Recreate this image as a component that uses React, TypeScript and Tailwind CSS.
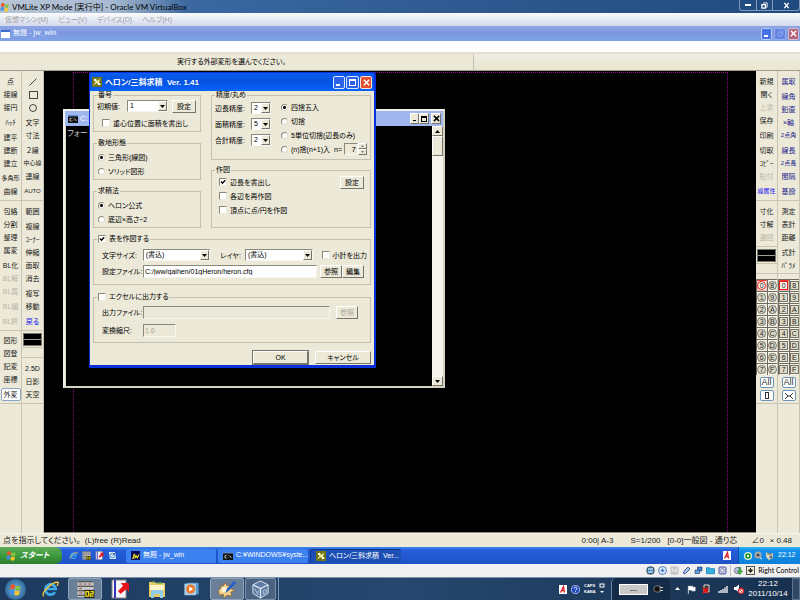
import React from 'react';

type Tool = {
  label: React.ReactNode;
  name?: string;
  gap?: boolean;
  small?: boolean;
  tone?: 'off' | 'navy' | 'blue';
  framed?: boolean;
};

const toneClass = {
  off: 'text-[#b9b6a6]',
  navy: 'text-[#1c1c8c]',
  blue: 'text-[#1414f0]',
};

const ToolGroup = ({ tools, className = '' }: { tools: Tool[]; className?: string }) => (
  <div className={`flex flex-col items-center border-b border-[#c9c5b2] ${className}`}>
    {tools.map((t, i) => (
      <button
        key={i}
        aria-label={t.name}
        disabled={t.tone === 'off'}
        className={`h-[13px] w-[20px] shrink-0 flex items-center justify-center whitespace-nowrap leading-[13px] ${
          t.small ? 'text-[6px]' : 'text-[7px]'
        } ${t.tone ? toneClass[t.tone] : 'text-[#1a1a1a]'} ${t.gap ? 'mt-[2px]' : ''} ${
          t.framed ? 'rounded-[2px] border border-[#8aa5c8] bg-white' : ''
        }`}
      >
        {t.label}
      </button>
    ))}
  </div>
);

const ShapeIcon = ({ kind }: { kind: 'line' | 'rect' | 'circle' }) => (
  <svg width="10" height="10" viewBox="0 0 10 10" fill="none" stroke="#444" strokeWidth="1">
    {kind === 'line' && <path d="M1.5 8.5 8.5 1.5" />}
    {kind === 'rect' && <rect x="1.5" y="1.5" width="8" height="7" />}
    {kind === 'circle' && <circle cx="5" cy="5" r="3.5" />}
  </svg>
);

const LineSwatch = () => (
  <button aria-label="線属性" className="mx-px h-[13px] self-stretch border border-[#77756a] bg-black flex items-center">
    <span className="h-px w-full bg-[#a0a0a0]" />
  </button>
);

const left1: Tool[][] = [
  [
    { label: '点' }, { label: '接線' }, { label: '接円' }, { label: 'ﾊｯﾁ', gap: true }, { label: '建平', gap: true },
    { label: '建断' }, { label: '建立' }, { label: '多角形', gap: true, small: true }, { label: '曲線' },
  ],
  [
    { label: '包絡' }, { label: '分割' }, { label: '整理' }, { label: '属変' }, { label: 'BL化', gap: true },
    { label: 'BL解', tone: 'off' }, { label: 'BL属', tone: 'off' }, { label: 'BL編', tone: 'off', gap: true },
    { label: 'BL終', tone: 'off', gap: true },
  ],
  [{ label: '図形' }, { label: '図登' }, { label: '記変' }, { label: '座標' }, { label: '外変', gap: true, framed: true }],
];

const left2: Tool[][] = [
  [
    { label: <ShapeIcon kind="line" />, name: '線' }, { label: <ShapeIcon kind="rect" />, name: '矩形' },
    { label: <ShapeIcon kind="circle" />, name: '円' }, { label: '文字', gap: true }, { label: '寸法' },
    { label: '２線', gap: true }, { label: '中心線', small: true }, { label: '連線' }, { label: 'AUTO', gap: true, small: true },
  ],
  [
    { label: '範囲' }, { label: '複線', gap: true }, { label: 'ｺｰﾅｰ' }, { label: '伸縮' }, { label: '面取' },
    { label: '消去' }, { label: '複写', gap: true }, { label: '移動' }, { label: '戻る', tone: 'blue', gap: true },
  ],
  [{ label: '2.5D' }, { label: '日影' }, { label: '天空' }],
];

const right1: Tool[][] = [
  [
    { label: '新規' }, { label: '開く' }, { label: '上書', tone: 'off' }, { label: '保存' }, { label: '印刷', gap: true },
    { label: '切取', gap: true }, { label: 'ｺﾋﾟｰ' }, { label: '貼付', tone: 'off' },
    { label: '線属性', tone: 'blue', gap: true, small: true },
  ],
  [{ label: '寸化' }, { label: '寸解' }, { label: '選図', tone: 'off' }],
];

const right2: Tool[][] = [
  [
    { label: '属取', tone: 'navy' }, { label: '線角', tone: 'navy', gap: true }, { label: '鉛直', tone: 'navy' },
    { label: '×軸', tone: 'navy' }, { label: '2点角', tone: 'navy', small: true }, { label: '線長', tone: 'navy', gap: true },
    { label: '2点長', tone: 'navy', small: true }, { label: '間隔', tone: 'navy' }, { label: '基設', tone: 'navy', gap: true },
  ],
  [{ label: '測定' }, { label: '表計' }, { label: '距離' }, { label: '式計', gap: true }, { label: 'ﾊﾟﾗﾒ' }],
];

const layerRows = [['0', '8'], ['1', '9'], ['2', 'A'], ['3', 'B'], ['4', 'C'], ['5', 'D'], ['6', 'E'], ['7', 'F']];

const LayerGrid = ({ round }: { round?: boolean }) => (
  <div className="grid grid-cols-2 bg-[#6e6c62] pt-px pl-px gap-px">
    {layerRows.flat().map((n) => (
      <button
        key={n}
        className={`h-[11px] flex items-center justify-center border ${
          n === '0' ? 'border-[#e9b9b0] border-t-[#e33] bg-[#f6f4ec]' : 'border-[#f5f3e8] bg-[#dedbc9]'
        }`}
      >
        <span
          className={`flex h-[9px] w-[9px] shrink-0 items-center justify-center border text-[7px] leading-[7px] text-[#222] ${
            round ? 'rounded-full' : ''
          } ${n === '0' ? 'border-[#f01818]' : 'border-[#77756a]'}`}
        >
          {n}
        </span>
      </button>
    ))}
  </div>
);

const LayerFoot = ({ label, children }: { label: string; children: React.ReactNode }) => (
  <div className="flex flex-col items-center gap-[2px] border-b border-[#c9c5b2] pt-[2px] pb-[2px]">
    <button className="h-[11px] w-[14px] rounded-[2px] border border-[#6d93b8] bg-white text-[9px] leading-[9px] text-[#333]">All</button>
    <button aria-label={label} className="flex h-[11px] w-[14px] items-center justify-center rounded-[2px] border border-[#6d93b8] bg-white text-[8px] leading-[9px] text-[#333]">
      {children}
    </button>
  </div>
);

const Group = ({ legend, className = '', children }: { legend: React.ReactNode; className?: string; children: React.ReactNode }) => (
  <fieldset className="min-w-0 border border-[#c2bfae]">
    <legend className="ml-[3px] h-[8px] px-px leading-[8px]">{legend}</legend>
    <div className={className}>{children}</div>
  </fieldset>
);

const Check = ({ label, checked }: { label: string; checked?: boolean }) => (
  <label className="flex items-center gap-[3px] whitespace-nowrap">
    <span className="grid">
      <input
        type="checkbox"
        defaultChecked={checked}
        className="col-start-1 row-start-1 peer h-[8px] w-[8px] appearance-none border border-t-[#8b897c] border-r-[#eceadd] border-b-[#eceadd] border-l-[#8b897c] bg-white"
      />
      <svg viewBox="0 0 8 8" className="pointer-events-none invisible col-start-1 row-start-1 h-[8px] w-[8px] peer-checked:visible">
        <path d="M2 3.6 3.5 5.2 6.2 2.3" fill="none" stroke="#000" strokeWidth="1.4" />
      </svg>
    </span>
    {label}
  </label>
);

const Radio = ({ name, label, checked }: { name: string; label: string; checked?: boolean }) => (
  <label className="flex h-[14px] items-center gap-[3px] whitespace-nowrap">
    <input
      type="radio"
      name={name}
      defaultChecked={checked}
      className="h-[7px] w-[7px] appearance-none rounded-full border border-t-[#8b897c] border-r-[#dddbcf] border-b-[#dddbcf] border-l-[#8b897c] bg-white checked:bg-[radial-gradient(circle,#000_1px,#fff_2px)]"
    />
    {label}
  </label>
);

const fieldBorder = 'border border-t-[#8b897c] border-l-[#8b897c] border-r-[#f7f6ef] border-b-[#f7f6ef]';
const raised = 'border border-t-white border-l-white border-r-[#77756a] border-b-[#77756a] bg-[#ece9d8]';

const Combo = ({ id, value, className }: { id: string; value: string; className: string }) => (
  <div className={`relative h-[12px] bg-white ${fieldBorder} ${className}`}>
    <select id={id} className="block h-[10px] w-full appearance-none bg-transparent pl-[2px] text-[7px] leading-[10px] outline-none">
      <option>{value}</option>
    </select>
    <span className={`pointer-events-none absolute top-0 right-0 flex h-[10px] w-[9px] items-center justify-center ${raised}`}>
      <svg viewBox="0 0 5 3" className="h-[3px] w-[5px]"><path d="M0 0h5L2.5 3z" /></svg>
    </span>
  </div>
);

const Push = ({ children, className, disabled }: { children: React.ReactNode; className: string; disabled?: boolean }) => (
  <button disabled={disabled} className={`h-[13px] shrink-0 text-[7px] leading-[11px] whitespace-nowrap disabled:text-[#aca899] ${raised} ${className}`}>
    {children}
  </button>
);

const HeronIcon = () => (
  <svg viewBox="0 0 10 10" className="h-[10px] w-[10px] shrink-0">
    <rect width="10" height="10" fill="#6f7414" />
    <path d="M1 8.500 3.500 5 2 3l2-1.500L5 4l3-2.500-1 4L9 8H6L5 6z" fill="#f2f0a0" />
    <path d="M2 2h2v2H2zM6 6h2v2H6z" fill="#fff" />
  </svg>
);

const XpClose = () => (
  <svg viewBox="0 0 10 10" className="h-[9px] w-[9px]"><path d="M2 2l6 6M8 2 2 8" stroke="#fff" strokeWidth="1.6" /></svg>
);

const HeronDialog = () => (
  <section
    aria-label="ヘロン/三斜求積"
    className="absolute top-px left-[45px] w-[287px] rounded-t-[3px] border border-r-[2px] border-b-[3px] border-[#0831d9] bg-[#ece9d8] text-[7px] leading-[9px] text-black"
  >
    <header className="flex h-[18px] items-center bg-linear-to-b from-[#0a5cf0] via-[#0552e0] to-[#0664fb] px-[2px] text-white">
      <HeronIcon />
      <h1 className="ml-[3px] flex-1 whitespace-pre text-[8px] font-bold">{'ヘロン/三斜求積  Ver. 1.41'}</h1>
      <div className="flex gap-px">
        <button aria-label="最小化" className="flex h-[13px] w-[12px] items-end justify-start rounded-[2px] border border-[#dfe8ff] bg-[#2c63e8] p-[2px]">
          <span className="h-[2px] w-[4px] bg-white" />
        </button>
        <button aria-label="最大化" className="flex h-[13px] w-[13px] items-center justify-center rounded-[2px] border border-[#dfe8ff] bg-[#2c63e8]">
          <span className="h-[7px] w-[7px] border border-t-[2px] border-white" />
        </button>
        <button aria-label="閉じる" className="flex h-[13px] w-[12px] items-center justify-center rounded-[2px] border border-[#ffe3da] bg-[#e2502c]"><XpClose /></button>
      </div>
    </header>

    <div className="px-[3px]">
      <div className="flex gap-[10px]">
        <div className="flex w-[108px] flex-col gap-[7px]">
          <Group legend="番号" className="px-[3px] pb-px">
            <div className="flex h-[14px] items-center">
              <label htmlFor="start" className="w-[30px] whitespace-nowrap">初期値:</label>
              <Combo id="start" value="1" className="w-[41px]" />
              <Push className="ml-[4px] w-[24px]">設定</Push>
            </div>
            <div className="mt-[3px] flex h-[14px] items-center pl-[5px]"><Check label="重心位置に面積を書出し" /></div>
          </Group>
          <Group legend="敷地形態" className="px-[4px] pt-[3px] pb-px">
            <Radio name="shape" label="三角形(線図)" checked />
            <Radio name="shape" label="ソリッド図形" />
          </Group>
          <Group legend="求積法" className="px-[4px] pt-[3px] pb-px">
            <Radio name="method" label="ヘロン公式" checked />
            <Radio name="method" label="底辺×高さ÷2" />
          </Group>
        </div>

        <div className="flex flex-1 flex-col gap-[6px]">
          <Group legend="精度/丸め" className="px-[3px] pt-px pb-[3px]">
            <div className="flex">
              <div className="w-[66px]">
                {[['side', '辺長精度:', '2'], ['area', '面積精度:', '5'], ['total', '合計精度:', '2']].map(([id, label, value]) => (
                  <div key={id} className="flex h-[16px] items-center">
                    <label htmlFor={id} className="w-[36px] whitespace-nowrap">{label}</label>
                    <Combo id={id} value={value} className="w-[20px]" />
                  </div>
                ))}
              </div>
              <div className="flex-1">
                <Radio name="round" label="四捨五入" checked />
                <Radio name="round" label="切捨" />
                <Radio name="round" label="5単位切捨(辺長のみ)" />
                <div className="flex items-center">
                  <Radio name="round" label="(n)捨(n+1)入" />
                  <label htmlFor="n" className="ml-[4px] flex-1">n=</label>
                  <input id="n" defaultValue="7" disabled className={`h-[12px] w-[14px] bg-[#ece9d8] pr-px text-right text-[8px] ${fieldBorder}`} />
                  <div className="flex flex-col">
                    <button aria-label="増やす" className={`h-[6px] w-[9px] ${raised}`}><svg viewBox="0 0 7 4" className="h-[4px] w-[7px]"><path d="M2 3h3L3.500 1z" fill="#777" /></svg></button>
                    <button aria-label="減らす" className={`h-[6px] w-[9px] ${raised}`}><svg viewBox="0 0 7 4" className="h-[4px] w-[7px]"><path d="M2 1h3L3.500 3z" fill="#777" /></svg></button>
                  </div>
                </div>
              </div>
            </div>
          </Group>
          <Group legend="作図" className="px-[6px] pt-px pb-[10px]">
            <div className="flex items-start justify-between pl-px">
              <div>
                <div className="flex h-[14px] items-center"><Check label="辺長を書出し" checked /></div>
                <div className="flex h-[14px] items-center"><Check label="各辺を再作図" /></div>
                <div className="flex h-[14px] items-center"><Check label="頂点に点/円を作図" /></div>
              </div>
              <Push className="mt-px w-[24px]">設定</Push>
            </div>
          </Group>
        </div>
      </div>

      <div className="mt-[7px]">
        <Group legend={<Check label="表を作図する" checked />} className="pt-[4px] pr-[3px] pb-[5px] pl-[8px]">
          <div className="flex h-[16px] items-center">
            <label htmlFor="size" className="w-[41px] whitespace-nowrap">文字サイズ:</label>
            <Combo id="size" value="(書込)" className="w-[68px]" />
            <label htmlFor="layer" className="ml-[10px] w-[25px] whitespace-nowrap">レイヤ:</label>
            <Combo id="layer" value="(書込)" className="w-[68px]" />
            <span className="ml-[9px]"><Check label="小計を出力" /></span>
          </div>
          <div className="flex h-[16px] items-center">
            <label htmlFor="cfg" className="w-[41px] whitespace-nowrap">設定ファイル:</label>
            <input id="cfg" defaultValue="C:/jww/gaihen/01gHeron/heron.cfg" className={`h-[13px] w-[174px] bg-white pl-px leading-[11px] ${fieldBorder}`} />
            <Push className="ml-[3px] w-[22px]">参照</Push>
            <Push className="w-[22px]">編集</Push>
          </div>
        </Group>
      </div>

      <div className="mt-[8px]">
        <Group legend={<Check label="エクセルに出力する" />} className="pt-[3px] pr-[3px] pb-[4px] pl-[8px]">
          <div className="flex h-[16px] items-center">
            <label htmlFor="out" className="w-[41px] whitespace-nowrap">出力ファイル:</label>
            <input id="out" disabled className={`h-[13px] w-[187px] bg-[#ece9d8] ${fieldBorder}`} />
            <Push disabled className="ml-[6px] w-[22px]">参照</Push>
          </div>
          <div className="mt-[2px] flex h-[16px] items-center">
            <label htmlFor="scale" className="w-[41px] whitespace-nowrap">変換縮尺:</label>
            <input id="scale" defaultValue="1.6" disabled className={`h-[13px] w-[33px] bg-[#ece9d8] pl-px text-[#aca899] ${fieldBorder}`} />
          </div>
        </Group>
      </div>

      <div className="mt-[8px] flex justify-end gap-[7px] pb-px">
        <Push className="w-[55px] outline outline-[#77756a]">OK</Push>
        <Push className="w-[56px]">キャンセル</Push>
      </div>
    </div>
  </section>
);

const CmdIcon = () => (
  <svg viewBox="0 0 10 8" className="h-[8px] w-[10px] shrink-0">
    <rect width="10" height="8" fill="#111" />
    <rect width="10" height="1.500" fill="#5d87c9" />
    <path d="M3.500 3.500H2v2.500h1.500M5 3.500v.5M5 5.500v.5M6.500 3.500 8.500 6" stroke="#ddd" strokeWidth=".8" fill="none" />
  </svg>
);

const ConsoleWindow = () => (
  <section
    aria-label="コマンドプロンプト"
    className="absolute top-[38px] left-[19px] flex h-[279px] w-[382px] flex-col border-[2px] border-t-[#f4f2e8] border-r-[#d5d2c2] border-b-[#d5d2c2] border-l-[#f4f2e8] bg-[#d5d2c2] text-[8px]"
  >
    <header className="flex h-[15px] items-center bg-[#9fb7ee] pr-[2px] pl-[3px] text-white">
      <CmdIcon />
      <h2 className="ml-[2px] flex-1">C:</h2>
      <div className="flex">
        <button aria-label="最小化" className={`flex h-[11px] w-[9px] items-end p-[2px] ${raised}`}><span className="h-px w-[4px] bg-black" /></button>
        <button aria-label="最大化" className={`flex h-[11px] w-[10px] items-center justify-center ${raised}`}><span className="h-[6px] w-[6px] border border-t-[2px] border-black" /></button>
        <button aria-label="閉じる" className={`ml-[2px] flex h-[11px] w-[10px] items-center justify-center ${raised}`}>
          <svg viewBox="0 0 8 8" className="h-[7px] w-[7px]"><path d="M1 1l6 6M7 1 1 7" stroke="#000" strokeWidth="1.7" /></svg>
        </button>
      </div>
    </header>
    <div className="flex flex-1 pl-px">
      <p className="flex-1 bg-black pt-[3px] pl-px leading-[10px] text-[#c8c8c8]">フォー</p>
      <div className="flex w-[11px] flex-col bg-[#f5f4ee]">
        <button aria-label="上へ" className={`flex h-[10px] items-center justify-center ${raised}`}><svg viewBox="0 0 5 3" className="h-[3px] w-[5px]"><path d="M0 3h5L2.500 0z" /></svg></button>
        <div className={`h-[20px] ${raised}`} />
        <div className="flex-1" />
        <button aria-label="下へ" className={`flex h-[10px] items-center justify-center ${raised}`}><svg viewBox="0 0 5 3" className="h-[3px] w-[5px]"><path d="M0 0h5L2.500 3z" /></svg></button>
      </div>
    </div>
  </section>
);

const JwwIcon = ({ className }: { className: string }) => (
  <svg viewBox="0 0 20 20" className={className}>
    <rect x="1" y="1" width="18" height="18" fill="#c9c9c9" />
    <path d="M1 2h18M1 7h18M1 12h18M1 17h8" stroke="#333" strokeWidth="1.200" />
    <path d="M3 4.500h3M8 4.500h3M13 4.500h3M3 9.500h3M3 14.500h4" stroke="#944" />
    <rect x="9" y="11" width="11" height="9" fill="#222" />
    <path d="M10.500 13h3v5h-3zM15.500 13h3v2.500h-3V18h3.500" stroke="#f1e312" strokeWidth="1.400" fill="none" />
  </svg>
);

const NotebookIcon = ({ className }: { className: string }) => (
  <svg viewBox="0 0 20 20" className={className}>
    <rect x="2" y="1" width="14" height="18" fill="#f4f4f8" stroke="#888" />
    <rect x="4" y="1" width="2" height="18" fill="#3136b8" />
    <path d="M8 12 13 7 11 4h8v9l-2.500-3-6 5z" fill="#e8141c" />
  </svg>
);

const IeIcon = ({ className }: { className: string }) => (
  <svg viewBox="0 0 20 20" className={className} fill="none">
    <path d="M15 13.500A5.800 5.800 0 1 1 15.800 10H6" stroke="#3fa9ec" strokeWidth="3" />
    <path d="M2.500 18C-1 14 12 2 18 2.500c1.500.5 0 3-1 4" stroke="#f5c93b" strokeWidth="1.500" />
  </svg>
);

const FlagIcon = ({ className }: { className: string }) => (
  <svg viewBox="0 0 12 12" className={className}>
    <path d="M1.500 2q2-1.500 4 0L5 6q-2-1.500-4 0z" fill="#f0552b" />
    <path d="M6.200 2.400q2 1.200 4.300 0L10 6.200q-2.200 1.300-4.300 0z" fill="#86c541" />
    <path d="M.9 6.700q2-1.500 4 0l-.5 4q-2-1.500-4 0z" fill="#3f8fe8" />
    <path d="M5.500 7q2.200 1.300 4.300 0l-.5 3.900q-2.200 1.200-4.300 0z" fill="#fbc72d" />
  </svg>
);

const ImeIcon = () => (
  <svg viewBox="0 0 8 9" className="h-[9px] w-[8px]">
    <rect width="8" height="9" fill="#fff" />
    <path d="M1.500 7.500 4.500 1.500l1 6M2.500 5.500h3" stroke="#d8232a" strokeWidth="1.300" fill="none" />
  </svg>
);

const XpTask = ({ icon, label, active }: { icon: React.ReactNode; label: string; active?: boolean }) => (
  <button
    className={`flex h-[14px] w-[91px] items-center gap-[3px] rounded-[2px] pl-[5px] text-left text-[7px] text-white ${
      active ? 'bg-[#1c4fb4] border-t border-l border-[#123a8c]' : 'bg-[#3c81f0] border-r border-[#1d52c4]'
    }`}
  >
    {icon}
    <span className="whitespace-pre">{label}</span>
  </button>
);

const XpTaskbar = () => (
  <nav className="flex h-[17px] items-center bg-linear-to-b from-[#3f85ee] via-[#245edb] via-20% to-[#1f52c6]">
    <button className="flex h-full w-[62px] items-center gap-[3px] rounded-r-[7px] bg-linear-to-b from-[#5eac5b] via-[#3c9a3c] to-[#2f7d30] pl-[6px] text-[8px] font-bold text-white italic">
      <FlagIcon className="h-[11px] w-[11px]" />スタート
    </button>
    <div className="flex w-[64px] items-center gap-[4px] pl-[7px]">
      <IeIcon className="h-[9px] w-[9px]" />
      <JwwIcon className="h-[9px] w-[9px]" />
      <NotebookIcon className="h-[9px] w-[9px]" />
      <svg viewBox="0 0 10 10" className="h-[9px] w-[9px]"><path d="M1 1h7l1 8H2z" fill="#dcebf8" /><circle cx="5" cy="5" r="2.500" fill="none" stroke="#3d86cc" /><path d="M5 5 9 1" stroke="#357" /></svg>
    </div>
    <div className="flex flex-1 gap-px">
      <XpTask
        icon={<svg viewBox="0 0 10 10" className="h-[9px] w-[9px] shrink-0"><rect width="10" height="10" fill="#080858" /><path d="M3.500 3 2.500 8H1M4.500 4v3.500l1.500-2 1 2L9 4" stroke="#f4e81c" fill="none" strokeWidth="1.200" /></svg>}
        label="無題 - jw_win"
      />
      <XpTask icon={<CmdIcon />} label="C:¥WINDOWS¥syste..." />
      <XpTask active icon={<HeronIcon />} label={'ヘロン/三斜求積  Ver...'} />
    </div>
    <div className="mr-[7px]"><ImeIcon /></div>
    <div className="flex h-full w-[62px] items-center gap-[2px] border-l border-[#0c51a8] bg-linear-to-b from-[#33b5f5] via-[#1290ea] via-20% to-[#0f80d8] pl-[5px] text-[7px] text-white">
      <svg viewBox="0 0 8 8" className="h-[8px] w-[8px]"><circle cx="4" cy="4" r="4" fill="#dff5d8" /><circle cx="4" cy="4" r="2" fill="none" stroke="#198a28" strokeWidth="1.500" /></svg>
      <svg viewBox="0 0 9 9" className="h-[9px] w-[9px]"><circle cx="4" cy="4" r="3.500" fill="#aaa" /><circle cx="4" cy="4" r="1.500" fill="#444" /><path d="M6 7l2 1" stroke="#fff" /></svg>
      <svg viewBox="0 0 9 9" className="h-[9px] w-[9px]"><path d="M1 1l4 3 3-2v5L4 9 1 6z" fill="#d5d2be" /><path d="M2 3h5" stroke="#b77a25" /><circle cx="6" cy="6" r="1.500" fill="#5a6a80" /></svg>
      <span className="ml-[2px]">22:12</span>
    </div>
  </nav>
);

const HostStatus = () => (
  <div className="flex h-[13px] items-center justify-end gap-[3px] bg-[#f0f0f0] text-[7px] text-black">
    <svg viewBox="0 0 9 9" className="h-[9px] w-[9px]"><rect x="1" y="1" width="7" height="7" rx="2.500" fill="#4a8cc2" stroke="#245" /><path d="M2 3h5M2 6h5" stroke="#e8f4ff" /></svg>
    <svg viewBox="0 0 9 9" className="h-[9px] w-[9px]"><circle cx="4.500" cy="4.500" r="4" fill="#e3eefb" stroke="#5580b8" /><path d="M4.500 1.500v6M1.500 4.500h6" stroke="#7ba3d8" strokeWidth=".7" /><circle cx="4.500" cy="4.500" r="1.300" fill="#2f6cc0" /></svg>
    <svg viewBox="0 0 9 9" className="h-[9px] w-[9px]"><path d="M1 1h7v7H1z" fill="#e4e4e4" stroke="#bbb" /><path d="M3 1h3v2.500H3zM2.500 5.500h4V8h-4z" fill="#c2c2c2" /></svg>
    <svg viewBox="0 0 9 9" className="h-[9px] w-[9px]"><path d="M3 4 6 1l2 2-4 4-2 1-.5-1.500z" fill="#a9c4ec" stroke="#4b5f9b" /></svg>
    <svg viewBox="0 0 9 9" className="h-[9px] w-[9px]"><path d="M3.500 1H8v4H3.500z" fill="#3a86dc" stroke="#235" strokeWidth=".6" /><path d="M1 4h4.500v3.500H1z" fill="#5ca4ee" stroke="#235" strokeWidth=".6" /></svg>
    <svg viewBox="0 0 10 9" className="h-[9px] w-[9px]"><path d="M.5 1.500h3.500l1 1H9.500V8h-9z" fill="#36b1e0" stroke="#1b83b5" /></svg>
    <svg viewBox="0 0 9 9" className="h-[9px] w-[9px]"><rect x="1" y="1" width="7" height="7" rx="1" fill="#c4c9ea" stroke="#53599b" /><circle cx="4.500" cy="4.500" r="1.500" fill="#fff" stroke="#53599b" strokeWidth=".6" /></svg>
    <span className="h-[11px] w-px bg-[#c4c4c4]" />
    <svg viewBox="0 0 10 9" className="h-[9px] w-[9px]"><circle cx="4" cy="4.500" r="3.500" fill="#b9c6e4" stroke="#446" strokeWidth=".7" /><path d="M5.500 1v4h-2l3 4 3-4h-2V1z" fill="#3fb543" stroke="#1d6b2a" strokeWidth=".5" /></svg>
    <svg viewBox="0 0 9 9" className="h-[9px] w-[9px]"><rect x=".5" y=".5" width="8" height="8" fill="#f3ecd2" stroke="#555" /><path d="M4.500 2v4M2.500 4l2 2.500 2-2.500z" stroke="#222" fill="#222" /></svg>
    <span className="pr-px font-['Lato'] whitespace-nowrap">Right Control</span>
  </div>
);

const HostTaskbar = () => (
  <nav className="flex h-[23px] items-center border-t border-[#7d93ad] bg-linear-to-r from-[#1d3a5e] via-[#26486f] via-50% to-[#17304e] text-white">
    <button aria-label="スタート" className="ml-[5px] flex h-[21px] w-[21px] items-center justify-center rounded-full bg-radial from-[#6fb6e0] to-[#1b4d80]">
      <FlagIcon className="h-[13px] w-[13px]" />
    </button>
    <button aria-label="Internet Explorer" className="mr-[8px] ml-[15px]"><IeIcon className="h-[18px] w-[19px]" /></button>
    <button aria-label="jw_win" className="flex h-full w-[34px] items-center justify-center rounded-[2px] border border-[#8ea4bb] bg-[#6a7f98]"><JwwIcon className="h-[18px] w-[19px]" /></button>
    <button aria-label="メモ" className="ml-[8px]"><NotebookIcon className="h-[20px] w-[20px]" /></button>
    <button aria-label="エクスプローラー" className="ml-[17px]">
      <svg viewBox="0 0 20 19" className="h-[19px] w-[20px]"><path d="M2 2h6l1 1h9v14H2z" fill="#e8c968" /><path d="M3 5h14v5H3z" fill="#fff5c8" /><path d="M5 2h3M10 3h5" stroke="#69a84d" strokeWidth="1.500" /><path d="M4 18v-6q0-2 2-2h8q2 0 2 2v6h-3v-4H7v4z" fill="#93cdec" /></svg>
    </button>
    <button aria-label="メディアプレーヤー" className="ml-[16px]">
      <svg viewBox="0 0 18 18" className="h-[16px] w-[17px]"><path d="M4 2h13v13H4z" fill="#5d9bcc" /><path d="M1 3h13v13H1z" fill="#a9d0ea" /><circle cx="8" cy="9" r="5" fill="#ef7622" /><path d="M6.500 6.200 11 9l-4.500 2.800z" fill="#fff" /></svg>
    </button>
    <button aria-label="ペイント" className="ml-[10px] flex h-full w-[34px] items-center justify-center rounded-[2px] border border-[#8ea4bb] bg-[#6a7f98]">
      <svg viewBox="0 0 20 20" className="h-[19px] w-[20px]">
        <path d="M1 11 4 8 2 6l4 .5L8 3l2 3 5-1-1 4 4 2-4 2 1 4-5-1-3 3-1-4-4 1z" fill="#f2d08a" stroke="#8a642a" strokeWidth=".8" />
        <circle cx="7" cy="10" r="3" fill="#fff3d0" />
        <path d="M17 1 10 9l-2 5 4-3 8-8z" fill="#2c5fc4" />
      </svg>
    </button>
    <button aria-label="VirtualBox" className="ml-px flex h-full w-[31px] items-center justify-center rounded-[2px] border border-[#7c92aa] bg-[#4b6381]">
      <svg viewBox="0 0 20 20" className="h-[19px] w-[19px]"><path d="M10 1 18 5v9l-8 5-8-5V5z" fill="#5d7aa3" stroke="#dfe9f5" /><path d="M2 5l8 4 8-4M10 9v10" stroke="#dfe9f5" strokeWidth="1.400" fill="none" /><path d="M4 9l3 6 1-4M13 11v4l3-2v-3z" stroke="#b4c8e2" fill="none" /></svg>
    </button>
    <span className="ml-[2px] h-full w-px bg-[#8095ae]" />
    <div className="flex-1" />
    <ImeIcon />
    <svg viewBox="0 0 10 10" className="ml-[4px] h-[9px] w-[9px]"><circle cx="5" cy="5" r="4.500" fill="#1f45c0" stroke="#b9c8f0" /><path d="M3.500 4q0-1.500 1.500-1.500T6.500 4 5 5.800M5 7v1" stroke="#fff" fill="none" /></svg>
    <div className="ml-[4px] w-[12px] text-[4px] leading-[6px] font-bold"><div>CAPS</div><div>KANA</div></div>
    <svg viewBox="0 0 6 12" className="mr-[6px] ml-[3px] h-[12px] w-[6px]"><rect x="1" y="1" width="4" height="3" fill="none" stroke="#fff" /><path d="M1 8h4L3 10z" fill="#fff" /></svg>
    <div className="flex h-full w-[59px] items-center gap-[5px] rounded-t-[5px] border-l border-[#6d83a0] bg-[#142b47] pl-[7px]">
      <span className="flex h-[11px] w-[29px] items-center justify-center border border-white bg-[#c8c8c8] text-[7px] leading-[9px] text-black">---</span>
      <svg viewBox="0 0 10 8" className="h-[8px] w-[10px]"><path d="M3 1h4v6H3Q0 6 1 4 0 2 3 1z" fill="#111" stroke="#bbb" strokeWidth=".6" /><path d="M7 2.500h3M7 5.500h3" stroke="#ccc" /></svg>
    </div>
    <div className="flex w-[74px] items-center justify-between pl-[5px]">
      <svg viewBox="0 0 5 4" className="h-[4px] w-[5px]"><path d="M0 3h5L2.500 0z" fill="#fff" /></svg>
      <svg viewBox="0 0 9 10" className="h-[9px] w-[9px]"><path d="M1 1v9M1.500 1.500h4v1h3v4H5v-1H1.500z" fill="#fff" stroke="#fff" strokeWidth=".8" /></svg>
      <svg viewBox="0 0 9 10" className="h-[10px] w-[9px]"><path d="M2 1h5v7H2z" fill="#333" stroke="#ddd" /><path d="M1 4l5 5M6 4 1 9" stroke="#e11" strokeWidth="1.800" /></svg>
      <svg viewBox="0 0 10 8" className="h-[8px] w-[10px]"><path d="M1 8V6M3 8V5M5 8V4M7 8V2.500M9 8V1" stroke="#fff" strokeWidth="1.300" /></svg>
      <svg viewBox="0 0 10 10" className="h-[10px] w-[10px]"><path d="M0 3h2l3-2.500v8L2 6H0z" fill="#fff" /><circle cx="7" cy="7" r="2.500" fill="#fff" stroke="#d8232a" strokeWidth="1.300" /><path d="M5.500 5.500l3 3" stroke="#d8232a" /></svg>
    </div>
    <div className="w-[48px] text-center text-[8px] leading-[10px]"><div>22:12</div><div>2011/10/14</div></div>
    <button aria-label="デスクトップの表示" className="h-full w-[8px] border border-[#5d738f] bg-[#2e4866]" />
  </nav>
);

const ToolColumn = ({ children }: { children: React.ReactNode }) => (
  <div className="flex w-[22px] shrink-0 flex-col border-r border-[#c9c5b2]">{children}</div>
);

export default function App() {
  return (
    <div className="flex min-h-screen flex-col bg-[#ece9d8] font-['Liberation_Sans','Noto_Sans_CJK_JP',sans-serif] [font-feature-settings:'palt']">
      <header className="flex h-[13px] items-center bg-linear-to-r from-[#6f8aac] via-[#3a679f] via-25% to-[#1f4a80] text-[8px] leading-[12px] text-black">
        <div className="flex h-full flex-1 items-center bg-linear-to-r from-white/50 from-15% to-transparent to-25%">
          <FlagIcon className="h-[10px] w-[10px]" />
          <h1 className="ml-[2px] font-['Lato','Noto_Sans_CJK_JP'] whitespace-nowrap">VMLite XP Mode [実行中] - Oracle VM VirtualBox</h1>
        </div>
        <div className="flex h-[11px] w-[61px] self-start rounded-b-[3px] border border-t-0 border-[#7f9abb] text-white">
          <button aria-label="最小化" className="flex w-[17px] items-center justify-center border-r border-[#7f9abb]"><span className="h-[2px] w-[6px] bg-white" /></button>
          <button aria-label="元に戻す" className="flex w-[16px] items-center justify-center border-r border-[#7f9abb]">
            <svg viewBox="0 0 8 8" className="h-[7px] w-[7px]" fill="none" stroke="#fff"><path d="M3 2V1h4v5H6" /><path d="M1 3h4v4H1z" strokeWidth="1.500" /></svg>
          </button>
          <button aria-label="閉じる" className="flex flex-1 items-center justify-center">
            <svg viewBox="0 0 8 8" className="h-[7px] w-[7px]"><path d="M1.500 1l5 6M6.500 1l-5 6" stroke="#fff" strokeWidth="1.600" /></svg>
          </button>
        </div>
      </header>

      <nav className="flex h-[13px] items-center gap-[10px] bg-linear-to-b from-[#fafbfd] to-[#d3daec] pl-[5px] text-[7px] leading-[12px] text-[#a0a0a0]">
        {['仮想マシン(M)', 'ビュー(V)', 'デバイス(D)', 'ヘルプ(H)'].map((m) => (
          <button key={m} disabled>{m}</button>
        ))}
      </nav>

      <div className="flex h-[15px] items-center bg-linear-to-b from-[#8fa6e4] via-[#7b97e0] to-[#80a4ea] pl-px text-[7px] font-bold text-[#dfe7fb]">
        <span className="h-[8px] w-[9px] border-t-[2px] border-[#3b6fd4] bg-white" />
        <h2 className="ml-[3px] flex-1">無題 - jw_win</h2>
        <div className="flex gap-[2px] pr-px">
          <button aria-label="最小化" className="flex h-[12px] w-[11px] items-end rounded-[2px] border border-[#b9cbf5] bg-[#4573e6] p-[2px]"><span className="h-[2px] w-[4px] bg-white" /></button>
          <button aria-label="元に戻す" disabled className="flex h-[12px] w-[12px] items-center justify-center rounded-[2px] border border-[#98aeea] bg-[#6583e2]">
            <svg viewBox="0 0 8 8" className="h-[7px] w-[7px]" fill="none" stroke="#8fa8f0"><path d="M3 2V1h4v4H6M1 3h4v4H1z" /></svg>
          </button>
          <button aria-label="閉じる" className="flex h-[12px] w-[11px] items-center justify-center rounded-[2px] border border-[#d3bcd0] bg-[#b5647c]"><XpClose /></button>
        </div>
      </div>
      <div className="h-[11px] bg-white" />

      <div className="flex h-[19px] border-t-[2px] border-b border-t-[#e3e0d3] border-b-[#a09d8e] text-[7px] text-black">
        <p className="flex w-[474px] items-center border-r border-[#c5c2b4] pl-[177px] whitespace-nowrap">実行する外部変形を選んでください。</p>
        <div className="flex-1 bg-linear-to-b from-[#efede4] to-[#eae6cf]" />
      </div>

      <main className="flex flex-1">
        <aside className="flex">
          <ToolColumn>
            <ToolGroup tools={left1[0]} className="h-[130px] pt-[4px]" />
            <ToolGroup tools={left1[1]} className="h-[130px] pt-[4px]" />
            <ToolGroup tools={left1[2]} className="h-[73px] pt-[3px]" />
          </ToolColumn>
          <ToolColumn>
            <ToolGroup tools={left2[0]} className="h-[130px] pt-[4px]" />
            <ToolGroup tools={left2[1]} className="h-[130px] pt-[4px]" />
            <div className="flex h-[17px] flex-col border-b border-[#c9c5b2] pt-[2px]"><LineSwatch /></div>
            <div className="h-[10px] border-b border-[#c9c5b2]" />
            <ToolGroup tools={left2[2]} className="h-[46px] pt-[4px]" />
          </ToolColumn>
        </aside>

        <div className="relative flex-1 overflow-hidden border-b border-[#8b897c] bg-black">
          <div className="absolute top-px right-[28px] bottom-0 left-[29px] border-x border-t border-dotted border-[#8a0a86]" />
          <ConsoleWindow />
          <HeronDialog />
        </div>

        <aside className="flex">
          <ToolColumn>
            <ToolGroup tools={right1[0]} className="h-[130px] pt-[4px]" />
            <ToolGroup tools={right1[1]} className="h-[46px] pt-[4px]" />
            <div className="flex h-[17px] flex-col border-b border-[#c9c5b2] pt-[2px]"><LineSwatch /></div>
            <div className="mb-[5px] h-[10px] border-b border-[#c9c5b2]" />
            <LayerGrid round />
            <LayerFoot label="レイヤ番号"><span className="h-[7px] w-[4px] border border-[#333]" /></LayerFoot>
          </ToolColumn>
          <ToolColumn>
            <ToolGroup tools={right2[0]} className="h-[130px] pt-[4px]" />
            <ToolGroup tools={right2[1]} className="mb-[5px] h-[73px] pt-[4px]" />
            <LayerGrid />
            <LayerFoot label="レイヤ解除">
              <svg viewBox="0 0 10 8" className="h-[8px] w-[10px]"><path d="M1 1l3 3-3 3M9 1 6 4l3 3M4 4h2" stroke="#333" fill="none" /></svg>
            </LayerFoot>
          </ToolColumn>
        </aside>
      </main>

      <footer className="flex h-[14px] items-center border-t border-[#f7f6ef] pr-[8px] pl-[3px] text-[8px] leading-[12px] whitespace-pre text-[#222]">
        <p className="flex-1">{'点を指示してください。  (L)free (R)Read'}</p>
        <span className="w-[49px]">0:00| A-3</span>
        <span className="w-[37px]">S=1/200</span>
        <span className="w-[84px]">[0-0]一般図 - 通り芯</span>
        <span className="w-[18px]">∠0</span>
        <span>× 0.48</span>
      </footer>
      <XpTaskbar />
      <HostStatus />
      <HostTaskbar />
    </div>
  );
}
